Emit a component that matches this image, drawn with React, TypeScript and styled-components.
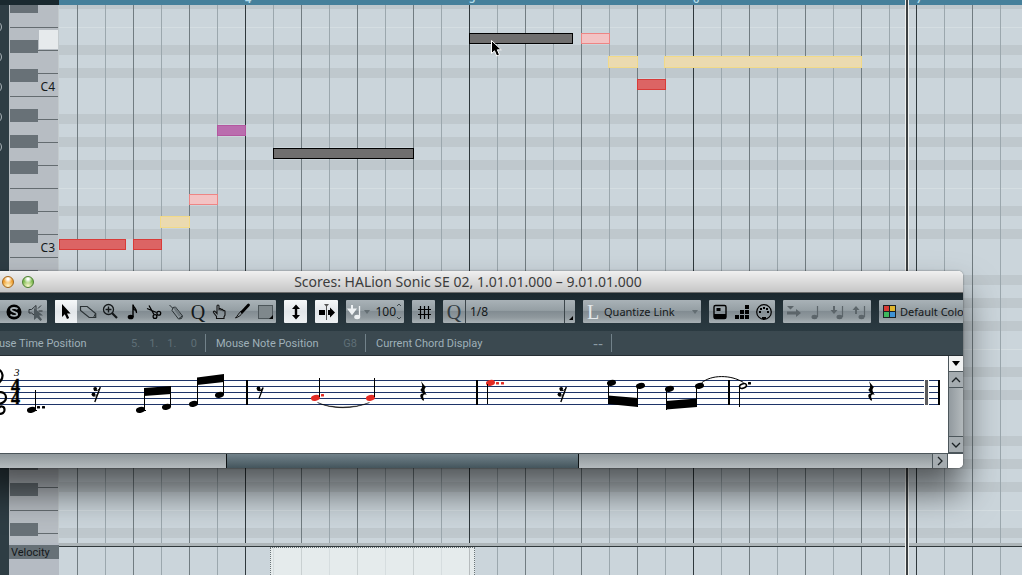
import React from "react";
import styled, { createGlobalStyle, css } from "styled-components";

const UI = `"Noto Sans", "Open Sans", sans-serif`;
const NARROW = `Roboto, "Noto Sans", sans-serif`;
const SERIF = `"Liberation Serif", serif`;

const Global = createGlobalStyle`
  * { box-sizing: border-box; }
  body { margin: 0; font-family: ${UI}; font-size: 11px; color: #15191b; overflow: hidden; }
  button, input, select { font: inherit; color: inherit; margin: 0; padding: 0; border: 0; background: none; border-radius: 0; }
`;

/* ---------- key editor ---------- */

const Editor = styled.main`
  position: relative;
  display: grid;
  grid-template-columns: 9px 50px 1fr;
  grid-template-rows: 5px 1fr 32px;
  height: 100vh;
  overflow: hidden;
  background: #b9c0c4;
`;

const RulerCorner = styled.div`
  grid-column: 1 / 3;
  background: #1a292f;
`;

const Ruler = styled.div`
  display: flex;
  overflow: hidden;
  background: #46809b;
`;

const RulerBar = styled.div<{ $w: number }>`
  flex: none;
  width: ${(p) => p.$w}px;
  height: 5px;
  margin-top: -7px;
  font-size: 11px;
  line-height: 12px;
  font-weight: 600;
  color: #b4dcea;
  &:first-child { margin-left: -38px; }
`;

const Rail = styled.div`
  grid-row: 2 / 4;
  display: flex;
  flex-direction: column;
  gap: 18px;
  padding-top: 16px;
  overflow: hidden;
  background: #2e3d44;
`;

const RailDot = styled.span`
  flex: none;
  width: 12px;
  height: 12px;
  margin-left: -10px;
  border: 1px solid #a9b3b8;
  border-radius: 50%;
`;

const Keyboard = styled.div`
  overflow: hidden;
  background: linear-gradient(to right, #b9bfc3 0 1px, #b7bdc3 1px 49px, #c3cacd 49px);
`;

const Octave = styled.div`
  position: relative;
  padding: 0 1px;
  &:first-child { margin-top: -139px; }
`;

const WhiteKey = styled.div<{ $down?: boolean }>`
  height: 23px;
  padding: 6px 3px 0 0;
  font-size: 12px;
  line-height: 16px;
  text-align: right;
  background: linear-gradient(#646c70 0 1px, transparent 1px);
  ${(p) =>
    p.$down &&
    css`
      background: linear-gradient(to top, transparent 0 1px, #e6eaec 1px 20px, transparent 20px) right / 19px 100%
          no-repeat,
        linear-gradient(#646c70 0 1px, transparent 1px);
    `}
`;

const BlackKey = styled.div<{ $y: number }>`
  position: absolute;
  left: 1px;
  top: ${(p) => p.$y}px;
  width: 28px;
  height: 13px;
  background: #687177;
`;

const Roll = styled.div`
  position: relative;
  overflow: hidden;
  background-color: #cbd5db;
  background-image: linear-gradient(
    #d5dee2 0 1px,
    transparent 1px 18px,
    #bfc8cd 18px 28px,
    transparent 28px 41px,
    #bfc8cd 41px 51px,
    transparent 51px 87px,
    #bfc8cd 87px 97px,
    transparent 97px 110px,
    #bfc8cd 110px 120px,
    transparent 120px 133px,
    #bfc8cd 133px 143px,
    transparent 143px
  );
  background-size: 100% 161px;
  background-position: 0 22px;
`;

const Bars = styled.div`
  display: flex;
  height: 100%;
  overflow: hidden;
`;

const Bar = styled.div<{ $w: number }>`
  flex: none;
  width: ${(p) => p.$w}px;
  background: linear-gradient(to right, #2f383c 0 1px, transparent 1px),
    repeating-linear-gradient(
      to right,
      #717c81 0 1px,
      transparent 1px 28px,
      #9ba7ad 28px 29px,
      transparent 29px 56px
    );
  &:first-child { margin-left: -38px; }
`;

type Tone = "red" | "yellow" | "pink" | "purple" | "selected";
const TONES: Record<Tone, [string, string]> = {
  red: ["#dc6464", "#d83b38"],
  yellow: ["#ebdab0", "#f2da88"],
  pink: ["#f3c3c4", "#ee8584"],
  purple: ["#ba6dae", "#b4579f"],
  selected: ["#706f6f", "#000000"],
};

const Note = styled.div<{ $x: number; $y: number; $w: number; $tone: Tone }>`
  position: absolute;
  left: ${(p) => p.$x}px;
  top: ${(p) => p.$y}px;
  width: ${(p) => p.$w}px;
  height: ${(p) => (p.$tone === "yellow" ? 12 : 11)}px;
  background: ${(p) => TONES[p.$tone][0]};
  border: 1px solid ${(p) => TONES[p.$tone][1]};
`;

const Pointer = styled.svg`
  position: absolute;
  left: 431px;
  top: 34px;
`;

const LaneHead = styled.div`
  padding-top: 2px;
  background: #b5bbc3;
`;

const LaneLabel = styled.div`
  height: 14px;
  padding-left: 2px;
  font-family: ${NARROW};
  font-size: 11px;
  line-height: 16px;
  background: #677177;
`;

const Lane = styled.div`
  position: relative;
  border-top: 3px solid #aeb6b9;
  background: #cbd5db;
`;

const LaneBody = styled.div`
  height: 29px;
  border-top: 1px solid #30393c;
`;

const LaneSelection = styled.div`
  position: absolute;
  left: 211px;
  top: 1px;
  width: 205px;
  height: 40px;
  background: rgba(240, 244, 244, 0.7);
  border: 1px dotted #6a7478;
`;

const Playhead = styled.div`
  position: absolute;
  left: 905px;
  top: 0;
  bottom: 0;
  width: 4px;
  background: #3c4042;
  border: solid #eef0ee;
  border-width: 0 1px;
`;

/* ---------- score window ---------- */

const Window = styled.section`
  position: absolute;
  left: -27px;
  right: 59px;
  top: 271px;
  border-radius: 5px;
  overflow: hidden;
  background: #fff;
`;

const WindowShadow = styled.div`
  position: absolute;
  left: -27px;
  right: 59px;
  top: 271px;
  height: 197px;
  border-radius: 5px;
  box-shadow: 0 23px 36px rgba(0, 0, 0, 0.6), 0 0 2px rgba(0, 0, 0, 0.5);
`;

const TitleBar = styled.header`
  position: relative;
  display: flex;
  align-items: center;
  justify-content: center;
  height: 22px;
  background: linear-gradient(#f0f0f0, #c6c6c6);
  border-bottom: 1px solid #6c6c6c;
`;

const Title = styled.h1`
  margin: 0;
  font-size: 14px;
  line-height: 20px;
  font-weight: 400;
  color: #3c3c3c;
`;

const Lights = styled.div`
  position: absolute;
  left: 9px;
  top: 5px;
  display: flex;
  gap: 8px;
`;

const Light = styled.button<{ $c: string; $edge: string }>`
  width: 12px;
  height: 12px;
  border: 1px solid ${(p) => p.$edge};
  border-radius: 50%;
  background: radial-gradient(circle at 50% 20%, #fff 0 10%, transparent 45%),
    radial-gradient(circle at 50% 90%, #fff8d0 0, ${(p) => p.$c} 60%);
`;

const Toolbar = styled.div`
  display: flex;
  gap: 8px;
  height: 38px;
  padding: 7px 0 8px;
  overflow: hidden;
  background: linear-gradient(#1b282e, #26343b 60%, #2b3a41);
`;

const Group = styled.div<{ $w: number }>`
  flex: none;
  display: flex;
  align-items: center;
  width: ${(p) => p.$w}px;
  height: 23px;
  border-radius: 1px;
  overflow: hidden;
  background: linear-gradient(#a9b2b7, #959fa4 45%, #828c92 50%, #8f989d 75%, #a9b1b5);
  font-size: 11px;
  line-height: 16px;
`;

const Tool = styled.button<{ $on?: boolean; $dim?: boolean; $w?: number }>`
  flex: none;
  width: ${(p) => p.$w ?? 22}px;
  height: 23px;
  ${(p) => p.$on && "background: linear-gradient(#f6f8f9, #e2e6e9 50%, #eef1f3);"}
  ${(p) => p.$dim && "color: #5c656a;"}
  svg { display: block; margin: 0 auto; }
`;

const SerifMark = styled.span<{ $c?: string; $w: number }>`
  flex: none;
  display: block;
  width: ${(p) => p.$w}px;
  text-align: center;
  font-family: ${SERIF};
  font-size: 20px;
  line-height: 22px;
  color: ${(p) => p.$c ?? "#15191b"};
`;

const Velocity = styled.input`
  flex: 1;
  min-width: 0;
  font-size: 12px;
  text-align: right;
`;

const Quantize = styled.select`
  flex: 1;
  align-self: stretch;
  appearance: none;
  padding-left: 4px;
  font-size: 12px;
  border: solid #3c464b;
  border-width: 0 1px;
`;

const FlatButton = styled.button<{ $pad: number }>`
  flex: 1;
  display: flex;
  align-items: center;
  height: 23px;
  padding: 0 3px 0 ${(p) => p.$pad}px;
  gap: 4px;
  font-size: 11px;
  text-align: left;
  white-space: nowrap;
  svg { flex: none; }
  svg:last-child { margin-left: auto; }
`;

const InfoLine = styled.div`
  display: flex;
  align-items: center;
  height: 25px;
  background: #3b4950;
  border-bottom: 1px solid #262e33;
  color: #9fb0b8;
  font-family: ${NARROW};
  font-size: 11px;
  line-height: 16px;
`;

const InfoCell = styled.div<{ $w: number }>`
  flex: none;
  display: flex;
  justify-content: space-between;
  width: ${(p) => p.$w}px;
  height: 18px;
  padding: 2px 8px 0 10px;
  border-right: 1px solid #72828a;
  white-space: nowrap;
`;

const InfoValue = styled.span<{ $bright?: boolean }>`
  display: flex;
  gap: 9px;
  color: ${(p) => (p.$bright ? "#8b9ca4" : "#5f6f77")};
  ${(p) => p.$bright && `font-family: "DejaVu Sans", sans-serif; font-size: 14px;`}
`;

const ScoreRow = styled.div`
  display: grid;
  grid-template-columns: 1fr 15px;
`;

const Sheet = styled.div`
  height: 97px;
  overflow: hidden;
  background: #fff;
  svg { display: block; }
`;

const VScroll = styled.div`
  display: flex;
  flex-direction: column;
  background: linear-gradient(to right, #929a9f, #b3b9bc);
  border-left: 1px solid #4c565b;
`;

const ScrollButton = styled.button<{ $light?: boolean }>`
  flex: none;
  display: grid;
  place-items: center;
  width: 14px;
  height: 16px;
  background: ${(p) => (p.$light ? "#f1f2f2" : "#a5acb0")};
  border: solid #4c565b;
  border-width: 0 0 1px;
`;

const VTrack = styled.div`
  flex: 1;
  border-bottom: 1px solid #4c565b;
`;

const HScroll = styled.div`
  display: flex;
  height: 15px;
  border-top: 1px solid #4c565b;
  background: linear-gradient(#8f979b, #b4babd);
`;

const HTrack = styled.div`
  flex: 1;
  padding-left: 253px;
`;

const HThumb = styled.div`
  width: 353px;
  height: 14px;
  border: solid #0d1214;
  border-width: 0 1px;
  background: linear-gradient(#71828a, #5b6c74 50%, #44555c);
`;

const HButton = styled.button`
  display: grid;
  place-items: center;
  width: 16px;
  height: 14px;
  background: #a5acb0;
  border: solid #4c565b;
  border-width: 0 1px;
`;

const Corner = styled.div`
  border-top: 1px solid #4c565b;
  background: #fff;
`;

const BAR_WIDTHS = [224, 224, 224, 223, 224, 224, 224, 224];
const BLACK_KEYS = [13, 42, 82, 108, 134];
const NOTES: [number, number, number, Tone][] = [
  [0, 234, 67, "red"],
  [74, 234, 29, "red"],
  [101, 211, 30, "yellow"],
  [130, 189, 29, "pink"],
  [158, 120, 29, "purple"],
  [214, 143, 141, "selected"],
  [410, 28, 104, "selected"],
  [522, 28, 29, "pink"],
  [549, 51, 30, "yellow"],
  [578, 74, 29, "red"],
  [605, 51, 198, "yellow"],
];

/* ---------- icons ---------- */

const Ic = ({ children, w = 22 }: { children: React.ReactNode; w?: number }) => (
  <svg width={w} height="23" viewBox={`0 0 ${w} 23`} fill="none" stroke="currentColor" aria-hidden="true">
    {children}
  </svg>
);

const SoloIcon = () => (
  <Ic>
    <circle cx="11" cy="12" r="7.500" fill="#000" stroke="none" />
    <path d="M14.500 9.200C13.600 7.600 8 7.400 8 9.800c0 2.300 6.200 1.800 6.200 4.300 0 2.400-5.600 2.200-6.700.4" stroke="#a4adb2" strokeWidth="1.800" />
  </Ic>
);
const SpeakerIcon = () => (
  <Ic>
    <path d="M4 9.500h2.500L11 5.500v11L6.500 13H4z" stroke="#2c3337" />
    <path d="M13 8.500l3-3M13.500 11h4" stroke="#2c3337" />
    <path d="M9 8v12l3-2.500 3.500 3.500 1.500-1.500-3-4h4z" fill="#4d575c" stroke="none" />
  </Ic>
);
const ArrowIcon = () => (
  <Ic>
    <path d="M7 4v13l2.800-2.700L12 19l2.200-1-2.200-4.600h3.600z" fill="#000" stroke="none" />
  </Ic>
);
const EraserIcon = () => (
  <Ic>
    <path d="M3.500 6.500h6.700l8.500 7v4h-6.500L3.500 10.500z" stroke="#2b3235" strokeWidth="1.200" />
    <path d="M18.500 13.500l-2 4" stroke="#2b3235" />
  </Ic>
);
const ZoomIcon = () => (
  <Ic>
    <circle cx="9.500" cy="9.500" r="5" strokeWidth="1.300" />
    <path d="M9.500 6.500v6M6.500 9.500h6" strokeWidth="1.400" />
    <path d="M13 13l5 5" strokeWidth="2.200" />
  </Ic>
);
const NoteIcon = () => (
  <Ic>
    <ellipse cx="9.700" cy="17" rx="3" ry="2.300" fill="#000" stroke="none" />
    <path d="M12 17V4.500c.3 3.500 4.300 4.300 3.500 8.500" stroke="#000" strokeWidth="1.400" />
    <path d="M12 7c1 2.500 4 3 3.600 6-.6-2-2.600-2.800-3.600-3z" fill="#000" stroke="none" />
  </Ic>
);
const ScissorsIcon = () => (
  <Ic>
    <path d="M6 5.500l5 9M4 8.500l9.500 4" stroke="#000" strokeWidth="1.300" />
    <circle cx="12" cy="16.500" r="1.900" stroke="#000" strokeWidth="1.300" />
    <circle cx="15.800" cy="13.300" r="1.900" stroke="#000" strokeWidth="1.300" />
  </Ic>
);
const GlueIcon = () => (
  <Ic>
    <path d="M4.500 5l3.500 3.500M8 7.500l2.500-.5 7 9-1 2.500-3 .5-6.500-8.500z M14 18.500l3.300-2.700" stroke="#2b3235" />
    <path d="M8.500 8.500l2-1 5.500 7.500-2 1.500z" fill="#6d767b" stroke="none" />
  </Ic>
);
const HandIcon = () => (
  <Ic>
    <path
      d="M7.500 18.500v-2L4.500 12.500c-.6-1.300 1-1.800 1.800-.8l1.700 1.800V6c0-1.400 2-1.400 2 0v4.500-1c0-1.200 2-1.200 2 0v1.300-.5c0-1.200 2-1.200 2 0v1c0-1 2-1 2 0v3.700l-1 2v1.500z"
      stroke="#111"
      strokeWidth="1.100"
    />
  </Ic>
);
const PenIcon = () => (
  <Ic>
    <path d="M17.500 5L11 12" stroke="#000" strokeWidth="2.800" strokeLinecap="round" />
    <path d="M11.500 12.500c-1 2.500-4 4.500-7 5.500 1.500-1.500 3.500-5 5.500-7" stroke="#111" />
  </Ic>
);
const RectIcon = () => (
  <Ic>
    <rect x="5.500" y="5.500" width="14" height="13" fill="#7f888c" stroke="#4d565a" />
    <path d="M20 15v4h-4z" fill="#000" stroke="none" />
  </Ic>
);
const UpDownIcon = () => (
  <Ic>
    <path d="M11 4.500l4 4.500h-2.800v6H15l-4 4.500L7 15h2.800V9H7z" fill="#000" stroke="none" />
  </Ic>
);
const AutoScrollIcon = () => (
  <Ic>
    <path d="M3 10h6v5H3zM12 10h2V7.500l5 5-5 5V15h-2z" fill="#000" stroke="none" />
    <path d="M10.500 6v14" stroke="#555" />
    <path d="M8 4h5l-2.500 3z" fill="#555" stroke="none" />
  </Ic>
);
const InsertIcon = () => (
  <Ic w={18}>
    <path d="M6 5v5M3 9.500h6l-3 4z" stroke="#edf1f3" strokeWidth="2" fill="#edf1f3" />
    <path d="M13.500 6v11" stroke="#edf1f3" strokeWidth="1.300" />
    <ellipse cx="11.200" cy="17" rx="3" ry="2.200" fill="#edf1f3" stroke="none" />
  </Ic>
);
const GridIcon = () => (
  <Ic>
    <path d="M7.500 6v13M11.500 6v13M15.500 6v13M5 9.500h13M5 14.500h13" stroke="#000" strokeWidth="1.200" />
  </Ic>
);
const Down = ({ c = "#636d72" }: { c?: string }) => (
  <svg width="6" height="4" viewBox="0 0 6 4" aria-hidden="true">
    <path d="M0 0h6L3 4z" fill={c} />
  </svg>
);
const PageDown = () => (
  <svg width="8" height="5" viewBox="0 0 8 5" aria-hidden="true">
    <path d="M0 0h8L4 5z" />
  </svg>
);
const SpinIcon = () => (
  <svg width="8" height="17" viewBox="0 0 8 17" fill="none" stroke="#3f494e" aria-hidden="true">
    <path d="M1 3l2-2 2 2M1 14l2 2 2-2" />
  </svg>
);
const PadIcon = () => (
  <Ic>
    <rect x="5" y="5.500" width="12" height="13" rx="1.500" stroke="#000" strokeWidth="1.400" />
    <path d="M5 14h12v3.500l-1 1.500H6l-1-1.500z" fill="#000" stroke="none" />
    <rect x="7.500" y="8" width="4" height="3" fill="#000" stroke="none" />
  </Ic>
);
const StepsIcon = () => (
  <Ic>
    <path
      d="M4 15h4v4H4zM9 15h4v4H9zM14 15h4v4h-4zM9 10h4v4H9zM14 10h4v4h-4zM14 5h4v4h-4z"
      fill="#000"
      stroke="none"
    />
  </Ic>
);
const MidiIcon = () => (
  <Ic>
    <circle cx="11" cy="12" r="7.300" stroke="#000" strokeWidth="1.200" />
    <path d="M6 11h2v2H6zM14 11h2v2h-2zM7 8h2v2H7zM13 8h2v2h-2zM10 7h2v2h-2zM9 17h4v2H9z" fill="#000" stroke="none" />
  </Ic>
);
const MoveIcon = () => (
  <Ic>
    <path d="M4 6h7L7.500 9.500zM4 11.500h9V9l5 4-5 4v-2.500H4z" fill="currentColor" stroke="none" />
  </Ic>
);
const QuarterIcon = () => (
  <Ic>
    <ellipse cx="9.500" cy="17" rx="3" ry="2.200" fill="currentColor" stroke="none" />
    <path d="M12.500 6v11" strokeWidth="1.200" />
  </Ic>
);
const NoteDownIcon = () => (
  <Ic>
    <path d="M6 6h2v4h2.500L7 14l-3.500-4H6z" fill="currentColor" stroke="none" />
    <ellipse cx="12.500" cy="17" rx="3" ry="2.200" fill="currentColor" stroke="none" />
    <path d="M15.500 6v11" strokeWidth="1.200" />
  </Ic>
);
const NoteUpIcon = () => (
  <Ic>
    <path d="M6 14h2v-4h2.500L7 6l-3.500 4H6z" fill="currentColor" stroke="none" />
    <ellipse cx="12.500" cy="17" rx="3" ry="2.200" fill="currentColor" stroke="none" />
    <path d="M15.500 6v11" strokeWidth="1.200" />
  </Ic>
);
const ColorsIcon = () => (
  <svg width="13" height="13" viewBox="0 0 13 13" aria-hidden="true">
    <rect width="13" height="13" fill="#1b2023" />
    <rect x="1" y="1" width="5" height="5" fill="#d83a34" />
    <rect x="7" y="1" width="5" height="5" fill="#e0b52c" />
    <rect x="1" y="7" width="5" height="5" fill="#3fb65c" />
    <rect x="7" y="7" width="5" height="5" fill="#3f93d4" />
  </svg>
);

/* ---------- notation ---------- */

const RED = "#e32b24";

const Head = ({ x, y, c = "#000" }: { x: number; y: number; c?: string }) => (
  <ellipse cx={x + 0.5} cy={y} rx="4.600" ry="3" fill={c} transform={`rotate(-14 ${x} ${y})`} />
);
const Stem = ({ x, a, b }: { x: number; a: number; b: number }) => (
  <rect x={x} y={a} width="1" height={b - a} />
);
const Dot = ({ x, y, c = "#000" }: { x: number; y: number; c?: string }) => (
  <rect x={x} y={y} width="3" height="2.500" rx=".6" fill={c} />
);
const SixteenthRest = ({ x }: { x: number }) => (
  <g transform={`translate(${x} 387)`}>
    <path d="M8.300 0L2.800 15" stroke="#000" strokeWidth="1.400" />
    <circle cx="3.200" cy="1.800" r="1.900" />
    <circle cx="1.500" cy="7.300" r="1.900" />
    <path d="M2 3.300C4.500 4.300 6.500 3.300 8 1M.5 8.800C3 9.800 4.500 8.800 6 6.500" fill="none" stroke="#000" />
  </g>
);
const QuarterRest = ({ x }: { x: number }) => (
  <g transform={`translate(${x} 381)`}>
    <path d="M.8 0L5.800 6.300C4 8.500 4 10 6.800 13.800 3.800 12.800 2 14 4 18.500L3.500 20C-.6 16.500-.8 12.500 3 12.500L.3 9C2.600 6.500 2.800 4.500.8 0z" />
  </g>
);

const Score = () => (
  <svg width="975" height="97" viewBox="-27 356 975 97" role="img" aria-label="Treble staff, bars 3 to 6">
    {[380, 386, 392, 398, 404].map((y) => (
      <rect key={y} x="-27" y={y} width="967" height="1" fill="#1e3468" />
    ))}
    <path
      d="M-6 409C-7 415 5 416 4.500 409.500 4.500 406 0 405.500-1 408M-1 403L-4.500 378C-5 370 1 367 2.500 375 3.500 384-11 387-11 396-11 406 6 406 6 397.500 6 391-4 390-4.500 396.500"
      fill="none"
      stroke="#000"
      strokeWidth="2.200"
    />
    <text x="14" y="376" fontFamily="Liberation Serif" fontStyle="italic" fontSize="11">3</text>
    <text x="11" y="392" fontFamily="Liberation Serif" fontWeight="700" fontSize="18" stroke="#000" strokeWidth=".5">4</text>
    <text x="11" y="404" fontFamily="Liberation Serif" fontWeight="700" fontSize="18" stroke="#000" strokeWidth=".5">4</text>

    <rect x="27" y="410" width="10" height="1" />
    <Head x={31} y={410} />
    <Stem x={35} a={390} b={410} />
    <Dot x={37} y={406} />
    <Dot x={42} y={406} />
    <SixteenthRest x={92} />

    <rect x="136" y="410" width="10" height="1" />
    <Head x={140} y={410} />
    <Stem x={144} a={388} b={410} />
    <Head x={166} y={407} />
    <Stem x={170} a={387} b={407} />
    <path d="M144 388L171 386V394L144 396z" />
    <Head x={193} y={404} />
    <Stem x={197} a={378} b={404} />
    <Head x={219} y={395} />
    <Stem x={223} a={375} b={395} />
    <path d="M197 377.500L224 374V382L197 385z" />
    <rect x="246" y="380" width="2" height="25" />

    <circle cx="258.500" cy="388.500" r="1.900" />
    <path d="M257.500 390C260 391.200 262 390 263.200 387.500L259 398.500" fill="none" stroke="#000" strokeWidth="1.300" />
    <Head x={315} y={398} c={RED} />
    <Stem x={319} a={378} b={397} />
    <Dot x={321} y={394} c={RED} />
    <Head x={370} y={398} c={RED} />
    <Stem x={374} a={378} b={397} />
    <path d="M317.500 402.500C331 409.500 354 409.500 369.500 402.500 354 408.500 331 408.500 317.500 402.500z" stroke="#000" strokeWidth=".4" />
    <QuarterRest x={420} />
    <rect x="476" y="380" width="2" height="25" />

    <Head x={490} y={383} c={RED} />
    <Stem x={487} a={384} b={404} />
    <Dot x={496} y={382} c={RED} />
    <Dot x={501} y={382} c={RED} />
    <SixteenthRest x={558} />
    <Head x={611} y={383} />
    <Stem x={608} a={384} b={404} />
    <Head x={640} y={386} />
    <Stem x={637} a={387} b={407} />
    <path d="M608 395.500L638 398V407L608 404z" />
    <Head x={669} y={389} />
    <Stem x={666} a={390} b={410} />
    <Head x={699} y={386} />
    <Stem x={696} a={387} b={407} />
    <path d="M666 401L697 398.500V407L666 409.500z" />
    <rect x="728" y="380" width="2" height="25" />
    <path d="M701.500 383C711 374.500 731 374.500 743.500 382.500" fill="none" stroke="#000" />
    <ellipse cx="743" cy="386" rx="3.600" ry="2.200" fill="#fff" stroke="#000" strokeWidth="1.500" transform="rotate(-20 743 386)" />
    <Stem x={739} a={387} b={407} />
    <Dot x={748} y={382} />
    <QuarterRest x={868} />
    <rect x="924" y="379" width="5" height="27" fill="#fff" />
    <rect x="925" y="380" width="3" height="25" fill="#5c5c5e" />
    <rect x="938" y="380" width="2" height="25" />
  </svg>
);

const BarLines = () => (
  <Bars>
    {BAR_WIDTHS.map((w, i) => (
      <Bar key={i} $w={w} />
    ))}
  </Bars>
);

export default function App() {
  return (
    <>
      <Global />
      <Editor>
        <RulerCorner />
        <Ruler>
          {BAR_WIDTHS.map((w, i) => (
            <RulerBar key={i} $w={w}>{i + 3}</RulerBar>
          ))}
        </Ruler>
        <Rail>
          {[0, 1, 2, 3, 4].map((i) => (
            <RailDot key={i} />
          ))}
        </Rail>
        <Keyboard>
          {[5, 4, 3, 2, 1].map((oct) => (
            <Octave key={oct}>
              <WhiteKey $down={oct === 4} />
              <WhiteKey />
              <WhiteKey>{oct < 5 ? `C${oct}` : ""}</WhiteKey>
              <WhiteKey />
              <WhiteKey />
              <WhiteKey />
              <WhiteKey />
              {BLACK_KEYS.map((y) => (
                <BlackKey key={y} $y={y} />
              ))}
            </Octave>
          ))}
        </Keyboard>
        <Roll>
          <BarLines />
          {NOTES.map(([x, y, w, tone], i) => (
            <Note key={i} $x={x} $y={y} $w={w} $tone={tone} />
          ))}
          <Pointer width="13" height="20" viewBox="0 0 13 20" aria-hidden="true">
            <path d="M1.500 1.500v13l3-2.700 2.200 5.200 2.800-1.200-2.200-5h4z" fill="#000" stroke="#fff" />
          </Pointer>
        </Roll>
        <LaneHead>
          <LaneLabel>Velocity</LaneLabel>
        </LaneHead>
        <Lane>
          <LaneBody>
            <BarLines />
          </LaneBody>
          <LaneSelection />
        </Lane>
        <Playhead />
        <WindowShadow />

        <Window>
          <TitleBar>
            <Lights>
              <Light aria-label="Close" $c="#e0574c" $edge="#8f3a33" />
              <Light aria-label="Minimize" $c="#f0a030" $edge="#a4661c" />
              <Light aria-label="Zoom" $c="#7dbb50" $edge="#4d7f32" />
            </Lights>
            <Title>Scores: HALion Sonic SE 02, 1.01.01.000 – 9.01.01.000</Title>
          </TitleBar>

          <Toolbar>
            <Group $w={74}>
              <Tool $w={30} aria-label="Setup" />
              <Tool aria-label="Solo"><SoloIcon /></Tool>
              <Tool aria-label="Acoustic feedback"><SpeakerIcon /></Tool>
            </Group>
            <Group $w={221}>
              <Tool $on aria-label="Object selection"><ArrowIcon /></Tool>
              <Tool aria-label="Erase"><EraserIcon /></Tool>
              <Tool aria-label="Zoom"><ZoomIcon /></Tool>
              <Tool aria-label="Insert note"><NoteIcon /></Tool>
              <Tool aria-label="Split"><ScissorsIcon /></Tool>
              <Tool aria-label="Glue"><GlueIcon /></Tool>
              <Tool aria-label="Display quantize"><SerifMark $w={22}>Q</SerifMark></Tool>
              <Tool aria-label="Layout"><HandIcon /></Tool>
              <Tool aria-label="Cut"><PenIcon /></Tool>
              <Tool aria-label="Export range"><RectIcon /></Tool>
            </Group>
            <Group $w={23}><Tool $w={23} $on aria-label="Lock layout"><UpDownIcon /></Tool></Group>
            <Group $w={23}><Tool $w={23} $on aria-label="Auto-scroll"><AutoScrollIcon /></Tool></Group>
            <Group $w={58}>
              <InsertIcon />
              <Down />
              <Velocity aria-label="Insert velocity" defaultValue="100" />
              <SpinIcon />
            </Group>
            <Group $w={23}><Tool $w={23} aria-label="Snap"><GridIcon /></Tool></Group>
            <Group $w={132}>
              <SerifMark $w={22} $c="#333c41">Q</SerifMark>
              <Quantize aria-label="Quantize value" defaultValue="1/8">
                <option>1/8</option>
              </Quantize>
              <svg width="10" height="23" viewBox="0 0 10 23" aria-hidden="true">
                <path d="M8 16v4H4z" />
              </svg>
            </Group>
            <Group $w={118}>
              <SerifMark $w={20} $c="#e4e9ec">L</SerifMark>
              <FlatButton $pad={1}><span>Quantize Link</span><Down /></FlatButton>
            </Group>
            <Group $w={66}>
              <Tool aria-label="Computer keyboard input"><PadIcon /></Tool>
              <Tool aria-label="Step input"><StepsIcon /></Tool>
              <Tool aria-label="MIDI input"><MidiIcon /></Tool>
            </Group>
            <Group $w={88}>
              <Tool $dim aria-label="Move insert mode"><MoveIcon /></Tool>
              <Tool $dim aria-label="Record pitch"><QuarterIcon /></Tool>
              <Tool $dim aria-label="Record note-on velocity"><NoteDownIcon /></Tool>
              <Tool $dim aria-label="Record note-off velocity"><NoteUpIcon /></Tool>
            </Group>
            <Group $w={120}>
              <FlatButton $pad={4}><ColorsIcon /><span>Default Colors</span></FlatButton>
            </Group>
          </Toolbar>

          <InfoLine>
            <InfoCell $w={233}>
              <span>Mouse Time Position</span>
              <InfoValue><span>5.</span><span>1.</span><span>1.</span><span>&nbsp;&nbsp;0</span></InfoValue>
            </InfoCell>
            <InfoCell $w={160}>
              <span>Mouse Note Position</span>
              <InfoValue>G8</InfoValue>
            </InfoCell>
            <InfoCell $w={246}>
              <span>Current Chord Display</span>
              <InfoValue $bright>--</InfoValue>
            </InfoCell>
          </InfoLine>

          <ScoreRow>
            <Sheet><Score /></Sheet>
            <VScroll>
              <ScrollButton $light aria-label="Page menu"><PageDown /></ScrollButton>
              <ScrollButton aria-label="Scroll up">
                <svg width="10" height="6" viewBox="0 0 10 6" fill="none" stroke="#1c2225" strokeWidth="1.300"><path d="M1 5l4-4 4 4" /></svg>
              </ScrollButton>
              <VTrack />
              <ScrollButton aria-label="Scroll down">
                <svg width="10" height="6" viewBox="0 0 10 6" fill="none" stroke="#1c2225" strokeWidth="1.300"><path d="M1 1l4 4 4-4" /></svg>
              </ScrollButton>
            </VScroll>
            <HScroll>
              <HTrack><HThumb /></HTrack>
              <HButton aria-label="Scroll right">
                <svg width="6" height="10" viewBox="0 0 6 10" fill="none" stroke="#1c2225" strokeWidth="1.300"><path d="M1 1l4 4-4 4" /></svg>
              </HButton>
            </HScroll>
            <Corner />
          </ScoreRow>
        </Window>
      </Editor>
    </>
  );
}
